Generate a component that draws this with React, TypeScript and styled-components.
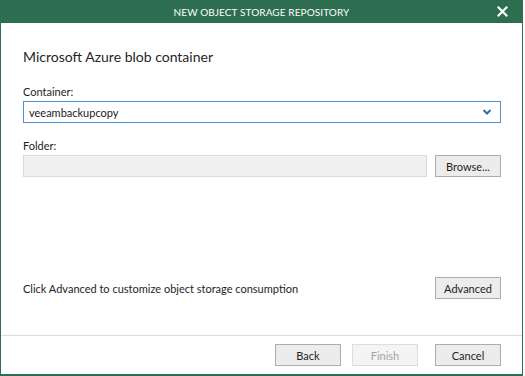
import React from "react";
import styled, { createGlobalStyle } from "styled-components";

const GlobalStyle = createGlobalStyle`
  html, body {
    margin: 0;
    padding: 0;
    background: #ffffff;
  }
  body {
    font-family: Lato, "Noto Sans", sans-serif;
    color: #1e1e1e;
  }
`;

const App: React.FC = () => {
  return (
    <>
      <GlobalStyle />
      <Window>
        <TitleBar>
          <span />
          <Title>NEW OBJECT STORAGE REPOSITORY</Title>
          <CloseButton aria-label="Close">
            <CloseIcon />
          </CloseButton>
        </TitleBar>

        <Body>
          <Heading>Microsoft Azure blob container</Heading>

          <FieldLabel>Container:</FieldLabel>
          <Select>
            <SelectValue>veeambackupcopy</SelectValue>
            <ChevronIcon />
          </Select>

          <FieldLabel $gap={15}>Folder:</FieldLabel>
          <FolderRow>
            <TextInput disabled />
            <Button>Browse...</Button>
          </FolderRow>

          <Spacer />

          <AdvancedRow>
            <Hint>Click Advanced to customize object storage consumption</Hint>
            <Button>Advanced</Button>
          </AdvancedRow>
        </Body>

        <Footer>
          <Button>Back</Button>
          <Button disabled $gap={11}>Finish</Button>
          <Button $gap={17}>Cancel</Button>
        </Footer>
      </Window>
    </>
  );
};

const CloseIcon = () => (
  <svg width="11" height="11" viewBox="0 0 11 11" xmlns="http://www.w3.org/2000/svg">
    <path d="M1.5 1.5l8 8M9.5 1.5l-8 8" stroke="#ffffff" strokeWidth="2.2" strokeLinecap="square" />
  </svg>
);

const ChevronIcon = () => (
  <svg width="8" height="6" viewBox="0 0 8 6" xmlns="http://www.w3.org/2000/svg">
    <path d="M0.5 1l3.5 3.5L7.5 1" stroke="#2d6fb8" strokeWidth="2" fill="none" />
  </svg>
);

const Window = styled.div`
  width: 523px;
  height: 376px;
  box-sizing: border-box;
  border: 1px solid #2c6e4f;
  border-top: none;
  border-bottom-width: 2px;
  display: flex;
  flex-direction: column;
  background: #ffffff;
`;

const TitleBar = styled.div`
  height: 23px;
  margin: 0 -1px;
  background: #2c6e4f;
  display: grid;
  grid-template-columns: 1fr auto 1fr;
  align-items: center;
`;

const Title = styled.div`
  color: #ffffff;
  font-size: 10px;
  letter-spacing: 0.1px;
`;

const CloseButton = styled.div`
  justify-self: end;
  display: flex;
  align-items: center;
  margin-right: 15px;
`;

const Body = styled.div`
  flex: 1;
  display: flex;
  flex-direction: column;
  padding: 24px 21px 36px 22px;
`;

const Heading = styled.div`
  font-size: 14px;
  line-height: 20px;
  color: #262626;
`;

const FieldLabel = styled.div<{ $gap?: number }>`
  font-size: 11px;
  line-height: 16px;
  margin-top: ${({ $gap }) => $gap ?? 17}px;
  margin-bottom: 1px;
  color: #1e1e1e;
`;

const Select = styled.div`
  height: 22px;
  box-sizing: border-box;
  border: 1px solid #4a90d4;
  display: flex;
  align-items: center;
  justify-content: space-between;
  padding: 0 9px 0 5px;
`;

const SelectValue = styled.span`
  font-size: 11px;
  color: #1a1a1a;
`;

const FolderRow = styled.div`
  display: flex;
  gap: 8px;
`;

const TextInput = styled.input`
  flex: 1;
  height: 22px;
  box-sizing: border-box;
  margin: 0;
  border: 1px solid #dadada;
  background: #f0f0f0;
  outline: none;
`;

const Spacer = styled.div`
  flex: 1;
`;

const AdvancedRow = styled.div`
  display: flex;
  align-items: center;
  justify-content: space-between;
`;

const Hint = styled.span`
  font-size: 11px;
  color: #1e1e1e;
`;

const Button = styled.button<{ $gap?: number }>`
  width: 66px;
  height: 22px;
  box-sizing: border-box;
  margin: 0 0 0 ${({ $gap }) => $gap ?? 0}px;
  padding: 0;
  border: 1px solid #acacac;
  background: #ececec;
  font-family: Lato, "Noto Sans", sans-serif;
  font-size: 11px;
  color: #1e1e1e;

  &:disabled {
    border-color: #dcdcdc;
    background: #f4f4f4;
    color: #a3a3a3;
  }
`;

const Footer = styled.div`
  height: 39px;
  box-sizing: border-box;
  border-top: 1px solid #dcdcdc;
  display: flex;
  justify-content: flex-end;
  align-items: flex-start;
  padding: 8px 21px 0 0;
`;

export default App;
